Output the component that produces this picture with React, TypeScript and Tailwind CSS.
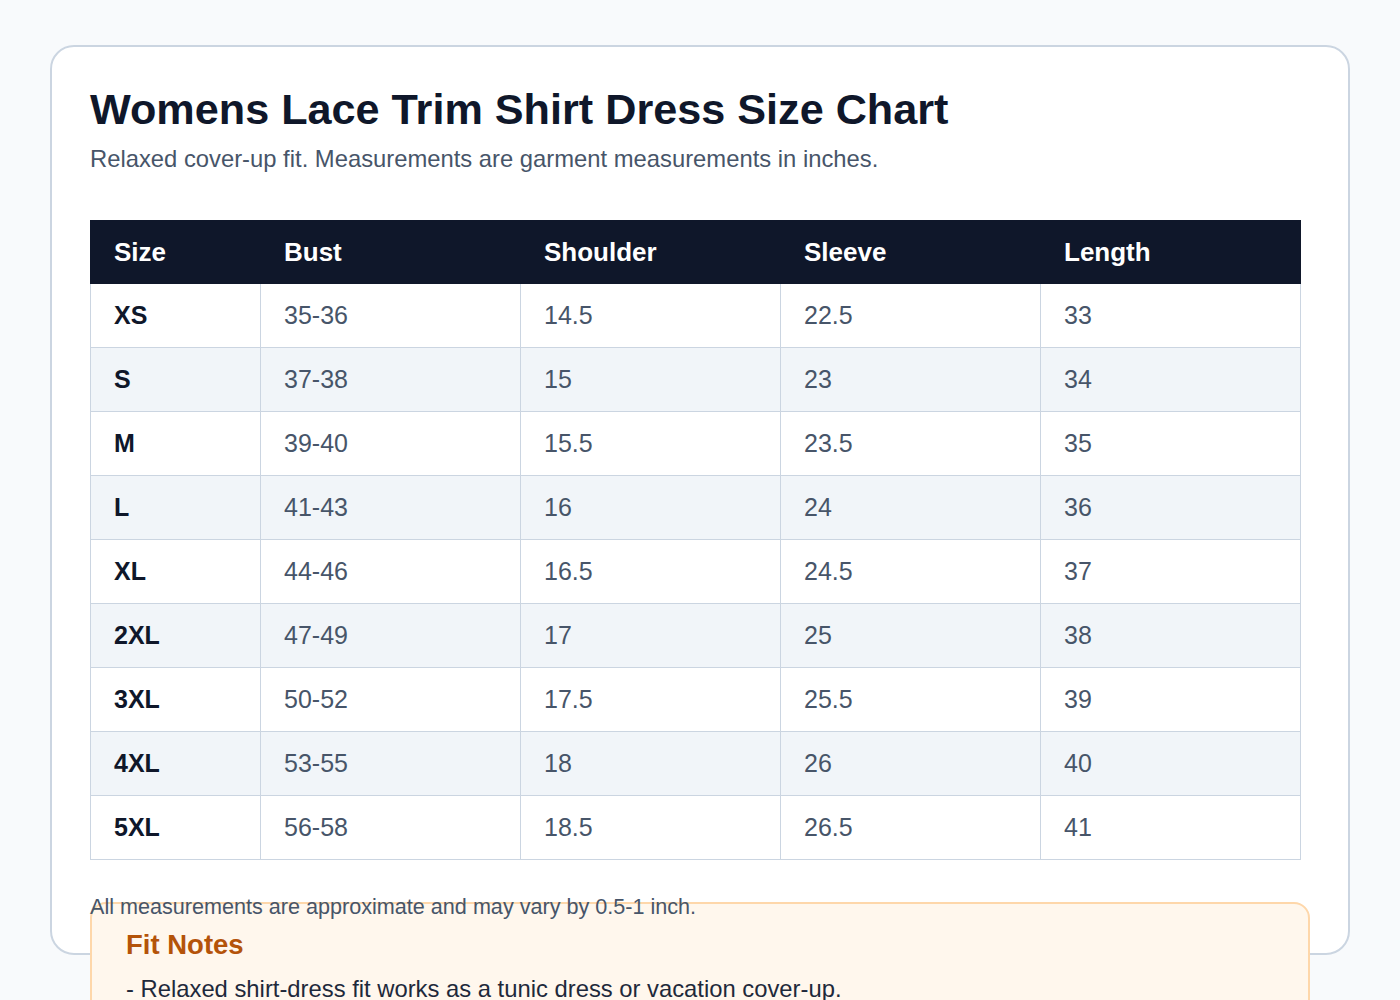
import React from 'react';

const rows = [
  ['XS', '35-36', '14.5', '22.5', '33'],
  ['S', '37-38', '15', '23', '34'],
  ['M', '39-40', '15.5', '23.5', '35'],
  ['L', '41-43', '16', '24', '36'],
  ['XL', '44-46', '16.5', '24.5', '37'],
  ['2XL', '47-49', '17', '25', '38'],
  ['3XL', '50-52', '17.5', '25.5', '39'],
  ['4XL', '53-55', '18', '26', '40'],
  ['5XL', '56-58', '18.5', '26.5', '41'],
];

const headers = ['Size', 'Bust', 'Shoulder', 'Sleeve', 'Length'];

export default function App() {
  return (
    <div className="min-h-screen bg-[#f8fafc] pt-[45px] pl-[50px] font-[family-name:'Liberation_Sans',Arial,sans-serif]">
      <div className="w-[1300px] h-[910px] bg-white border-2 border-[#cbd5e1] rounded-[24px] p-[38px]">
        <h1 className="text-[43.2px] leading-[48px] font-bold text-[#0f172a]">
          Womens Lace Trim Shirt Dress Size Chart
        </h1>
        <p className="mt-[10px] text-[23.8px] leading-[31px] text-[#475569]">
          Relaxed cover-up fit. Measurements are garment measurements in inches.
        </p>

        <div className="mt-[46px] w-[1211px]">
          <div className="grid grid-cols-[170px_260px_260px_260px_261px] bg-[#0f172a] h-[64px]">
            {headers.map((h) => (
              <div key={h} className="flex items-center pl-6 text-[26px] font-bold text-white">
                {h}
              </div>
            ))}
          </div>
          {rows.map((row, i) => (
            <div
              key={row[0]}
              className={`grid grid-cols-[170px_260px_260px_260px_260px] h-[64px] border-l border-b border-[#cbd5e1] ${
                i % 2 === 1 ? 'bg-[#f1f5f9]' : 'bg-white'
              }`}
            >
              {row.map((cell, j) => (
                <div
                  key={j}
                  className={`flex items-center text-[25px] border-r border-[#cbd5e1] ${
                    j === 0 ? 'font-bold text-[#0f172a] pl-[23px]' : 'text-[#475569] pl-[23px]'
                  }`}
                >
                  {cell}
                </div>
              ))}
            </div>
          ))}
        </div>

        <p className="mt-[33px] text-[21.6px] leading-[28px] text-[#475569]">
          All measurements are approximate and may vary by 0.5-1 inch.
        </p>

        <div className="mt-[-19px] w-[1220px] bg-[#fff7ed] border-2 border-[#fed7aa] rounded-[16px] px-[34px] pt-[25px] pb-6">
          <h2 className="text-[27.5px] leading-[32px] font-bold text-[#b45309]">Fit Notes</h2>
          <p className="mt-[13px] text-[23.8px] leading-[30px] text-[#1e293b]">
            - Relaxed shirt-dress fit works as a tunic dress or vacation cover-up.
          </p>
        </div>
      </div>
    </div>
  );
}
